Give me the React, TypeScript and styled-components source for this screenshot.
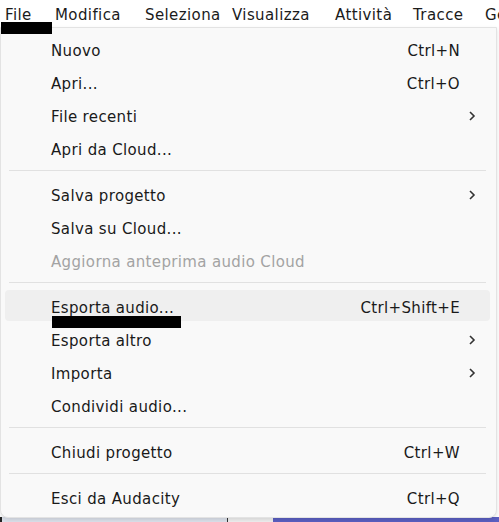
import React from "react";
import styled, { createGlobalStyle } from "styled-components";

const Global = createGlobalStyle`
  html, body { margin: 0; padding: 0; background: #ffffff; }
  body { font-family: "DejaVu Sans", "Noto Sans", sans-serif; }
`;

const Page = styled.div`
  position: relative;
  width: 499px;
  height: 522px;
  overflow: hidden;
  background: #ffffff;
  display: flex;
  flex-direction: column;
`;

const MenuBar = styled.div`
  display: flex;
  height: 27px;
  align-items: center;
  background: #ffffff;
  padding-left: 5px;
  font-size: 15px;
  letter-spacing: 0.4px;
  color: #1b1b1b;
  white-space: nowrap;
`;

const BarItem = styled.span<{ $w: number }>`
  width: ${(p) => p.$w}px;
  flex: none;
  line-height: 27px;
  padding-top: 4px;
`;

const Under = styled.span`
  text-decoration: underline;
  text-underline-offset: 2px;
`;

const Backdrop = styled.div`
  position: absolute;
  left: 0;
  right: 0;
  bottom: 0;
  height: 5px;
  display: grid;
  grid-template-columns: 228px 45px 1fr;
`;

const BackLeft = styled.div`
  background: #dde2ec;
  border-left: 2px solid #222;
  border-right: 1px solid #333;
`;

const BackMid = styled.div`
  background: #f0f0f0;
`;

const BackRight = styled.div`
  background: #5b5fc2;
`;

const Menu = styled.div`
  position: absolute;
  left: 0;
  top: 27px;
  width: 497px;
  height: 491px;
  box-sizing: border-box;
  background: #f9f9f9;
  border: 1px solid #e3e3e3;
  border-radius: 0 0 8px 8px;
  box-shadow: 0 2px 4px rgba(0, 0, 0, 0.12);
  padding: 4px 6px 0 4px;
  display: flex;
  flex-direction: column;
  font-size: 15px;
  letter-spacing: 0.35px;
`;

const Row = styled.div<{ $hi?: boolean; $disabled?: boolean }>`
  flex: none;
  display: grid;
  grid-template-columns: 1fr auto 30px;
  align-items: center;
  padding-left: 46px;
  border-radius: 4px;
  color: ${(p) => (p.$disabled ? "#a3a3a3" : "#1a1a1a")};
  background: ${(p) => (p.$hi ? "#efefef" : "transparent")};
  margin: ${(p) => (p.$hi ? "1px 0" : "0")};
  height: ${(p) => (p.$hi ? "31px" : "33px")};
  white-space: nowrap;
`;

const Label = styled.span`
  padding-top: 4px;
`;

const Shortcut = styled.span`
  text-align: right;
  padding-top: 4px;
`;

const Chevron = styled.span`
  display: flex;
  align-items: center;
  justify-content: flex-end;
  padding-right: 14px;
  padding-top: 2px;
`;

const Separator = styled.div`
  flex: none;
  height: 13px;
  display: flex;
  align-items: center;
  padding: 0 4px;
  &::after {
    content: "";
    flex: 1;
    height: 1px;
    background: #e1e1e1;
  }
`;

const Redact = styled.div<{ $x: number; $y: number; $w: number; $h: number }>`
  position: absolute;
  left: ${(p) => p.$x}px;
  top: ${(p) => p.$y}px;
  width: ${(p) => p.$w}px;
  height: ${(p) => p.$h}px;
  background: #000;
`;

type Item =
  | { sep: true }
  | { label: string; shortcut?: string; sub?: boolean; disabled?: boolean; hi?: boolean; sep?: false };

const items: Item[] = [
  { label: "Nuovo", shortcut: "Ctrl+N" },
  { label: "Apri...", shortcut: "Ctrl+O" },
  { label: "File recenti", sub: true },
  { label: "Apri da Cloud..." },
  { sep: true },
  { label: "Salva progetto", sub: true },
  { label: "Salva su Cloud..." },
  { label: "Aggiorna anteprima audio Cloud", disabled: true },
  { sep: true },
  { label: "Esporta audio...", shortcut: "Ctrl+Shift+E", hi: true },
  { label: "Esporta altro", sub: true },
  { label: "Importa", sub: true },
  { label: "Condividi audio..." },
  { sep: true },
  { label: "Chiudi progetto", shortcut: "Ctrl+W" },
  { sep: true },
  { label: "Esci da Audacity", shortcut: "Ctrl+Q" },
];

const ChevronIcon = () => (
  <svg width="8" height="12" viewBox="0 0 8 12">
    <path d="M2 2 L6 6 L2 10" fill="none" stroke="#333" strokeWidth="1.6" />
  </svg>
);

export default function App() {
  return (
    <Page>
      <Global />
      <MenuBar>
        <BarItem $w={50}><Under>F</Under>ile</BarItem>
        <BarItem $w={90}>Modifica</BarItem>
        <BarItem $w={87}>Seleziona</BarItem>
        <BarItem $w={103}>Visualizza</BarItem>
        <BarItem $w={78}>Attività</BarItem>
        <BarItem $w={72}>Tracce</BarItem>
        <BarItem $w={60}>Genera</BarItem>
      </MenuBar>
      <Backdrop>
        <BackLeft />
        <BackMid />
        <BackRight />
      </Backdrop>
      <Menu>
        {items.map((it, i) =>
          it.sep ? (
            <Separator key={i} />
          ) : (
            <Row key={i} $hi={it.hi} $disabled={it.disabled}>
              <Label>{it.label}</Label>
              <Shortcut>{it.shortcut ?? ""}</Shortcut>
              <Chevron>{it.sub ? <ChevronIcon /> : null}</Chevron>
            </Row>
          )
        )}
      </Menu>
      <Redact $x={1} $y={22} $w={51} $h={12} />
      <Redact $x={52} $y={316} $w={129} $h={12} />
    </Page>
  );
}
